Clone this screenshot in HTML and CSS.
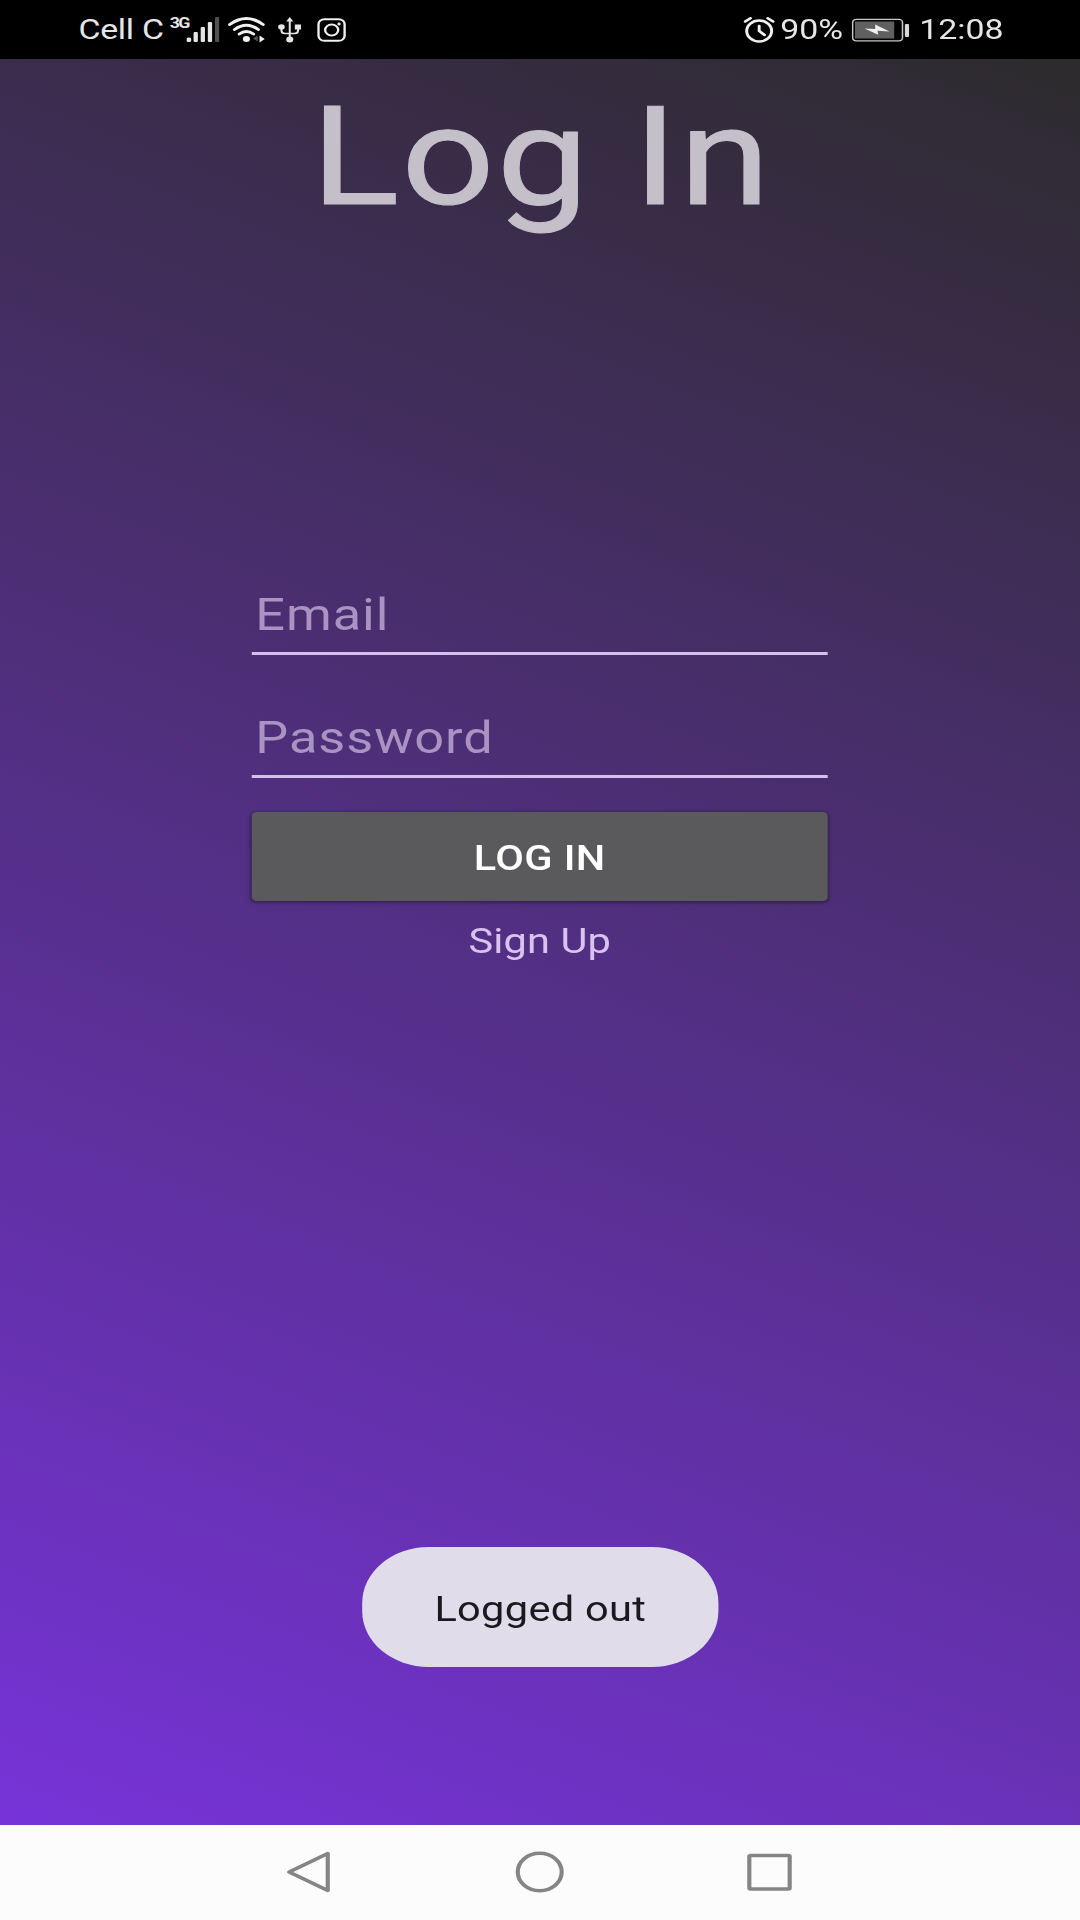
FILE: index.html
```html
<!DOCTYPE html>
<html lang="en">
<head>
    <meta charset="UTF-8">
    <meta name="viewport" content="width=device-width, initial-scale=1.0">
    <title>Log In</title>
    <link rel="stylesheet" href="styles.css">
</head>
<body>
    <div class="screen">
        <header class="status-bar">
            <div class="status-left">
                <span class="carrier">Cell C</span>
                <span class="network">3G</span>
                <svg class="signal" width="28" height="26" viewBox="0 0 28 26" fill="#e6e6e6">
                    <rect x="0" y="20.5" width="4" height="4.5" rx="1.5"/>
                    <rect x="6" y="15" width="3.6" height="10" rx="1"/>
                    <rect x="12" y="10" width="3.6" height="15" rx="1"/>
                    <rect x="18" y="5" width="3.6" height="20" rx="1"/>
                    <rect x="24" y="0" width="3.6" height="25" rx="1" fill="#505050"/>
                </svg>
                <svg class="wifi" width="32" height="26" viewBox="0 0 32 26" fill="none" stroke="#f0f0f0" stroke-width="2.8" stroke-linecap="round">
                    <path d="M1.5 7.5Q15.5-4.5 29.5 7.5"/>
                    <path d="M5.5 12.5Q15.5 4 25.5 12.5"/>
                    <path d="M9.5 17Q15.5 12 21.5 17"/>
                    <circle cx="15.5" cy="22" r="3" fill="#f0f0f0" stroke="none"/>
                    <path d="M25 18.5v6l-4-3z" fill="#555" stroke="none"/>
                    <path d="M26.5 18.5l4.5 3.5-4.5 3.5z" fill="#f0f0f0" stroke="none"/>
                </svg>
                <svg class="usb" width="20" height="26" viewBox="0 0 20 26" fill="#e6e6e6">
                    <path d="M10 3v18M3 9v4.5q0 3 3 3h8q3 0 3-3V9" fill="none" stroke="#e6e6e6" stroke-width="1.7"/>
                    <path d="M10 0l3 4.5H7z"/>
                    <circle cx="3" cy="10" r="2.8"/>
                    <rect x="14.3" y="7.5" width="5.2" height="5"/>
                    <circle cx="10" cy="22.5" r="3"/>
                </svg>
                <svg class="instagram" width="25" height="24" viewBox="0 0 25 24" fill="none" stroke="#f0f0f0" stroke-width="2">
                    <rect x="1.2" y="1.2" width="22" height="21.6" rx="5"/>
                    <circle cx="12.3" cy="12" r="5.5"/>
                    <circle cx="18.5" cy="6" r="1.4" fill="#f0f0f0" stroke="none"/>
                </svg>
            </div>
            <div class="status-right">
                <svg class="alarm" width="27" height="26" viewBox="0 0 27 26" fill="none" stroke="#f0f0f0" stroke-width="2.5" stroke-linecap="round">
                    <circle cx="13.3" cy="14" r="10.5"/>
                    <path d="M1.5 4.5L6 1.3M25 4.5l-4.5-3.2M13.3 9v5l4.5 4"/>
                </svg>
                <span class="percent">90%</span>
                <svg class="battery" width="49" height="24" viewBox="0 0 49 24">
                    <rect x="1" y="1.3" width="42" height="21.5" rx="3" fill="none" stroke="#c8c8c8" stroke-width="1.3"/>
                    <rect x="3" y="3.5" width="33" height="17" fill="#606060"/>
                    <path d="M11 10.500l9 .5V6.500l12 7-10-.8.5 4z" fill="#f0f0f0"/>
                    <rect x="45" y="6" width="3.5" height="13" rx="1" fill="#d8d8d8"/>
                </svg>
                <span class="time">12:08</span>
            </div>
        </header>

        <main class="content">
            <h1>Log In</h1>
            <form id="loginForm">
                <input type="email" id="email" name="email" placeholder="Email" aria-label="Email">
                <input type="password" id="password" name="password" placeholder="Password" aria-label="Password">
                <button type="submit">LOG IN</button>
                <a class="signup">Sign Up</a>
            </form>
            <div class="toast">Logged out</div>
        </main>

        <nav class="nav-bar">
            <svg width="38" height="42" viewBox="0 0 38 42">
                <path d="M34 2.5v37L1.500 21z"/>
            </svg>
            <svg width="38" height="42" viewBox="0 0 38 42">
                <ellipse cx="18.5" cy="21" rx="18.500" ry="18.700"/>
            </svg>
            <svg width="38" height="42" viewBox="0 0 38 42">
                <rect x="2" y="4.500" width="34" height="33.500" rx="1"/>
            </svg>
        </nav>
    </div>
</body>
</html>
```

FILE: styles.css
```css
body {
    margin: 0;
    padding: 0;
    overflow: hidden;
    font-family: Roboto, Arial, sans-serif;
}

/* Tall phone layout widened to fill the window */
.screen {
    display: flex;
    flex-direction: column;
    width: 910px;
    height: 1920px;
    transform: scaleX(1.1875);
    transform-origin: 0 0;
}

.status-bar {
    display: flex;
    justify-content: space-between;
    box-sizing: border-box;
    height: 59px;
    padding: 0 65px 0 66px;
    background-color: #000;
    color: #e6e6e6;
    font-size: 28.5px;
    line-height: 62px;
}

.status-left, .status-right {
    display: flex;
    align-items: center;
}

.carrier {
    letter-spacing: -0.2px;
}

.network {
    align-self: flex-start;
    width: 14px;
    margin: 15px 0 0 5px;
    font-size: 15px;
    font-weight: bold;
    line-height: 16px;
    letter-spacing: -1.5px;
}

.wifi {
    margin-left: 7px;
}

.usb {
    margin-left: 10px;
}

.instagram {
    margin-left: 13px;
}

.percent {
    margin-left: 4px;
}

.battery {
    margin: 0 8px 0 7px;
}

.content {
    display: flex;
    flex-direction: column;
    align-items: center;
    height: 1766px;
    background: linear-gradient(24.5deg, #7733d8, #2d2b2d);
}

h1 {
    margin: 17px 0 0;
    color: #c5bfca;
    font-size: 138px;
    font-weight: normal;
    line-height: 163px;
    letter-spacing: 1.6px;
    text-indent: 2px;
    -webkit-text-stroke: 1px #c5bfca;
}

#loginForm {
    display: flex;
    flex-direction: column;
    width: 485px;
    margin: 331px 1px 0 0;
}

input {
    box-sizing: border-box;
    height: 85px;
    margin-bottom: 38px;
    padding: 8px 3px 0;
    border: none;
    border-bottom: 3px solid #d5bfec;
    border-radius: 0;
    outline: none;
    background: none;
    color: #fff;
    font-family: inherit;
    font-size: 44px;
    letter-spacing: 0.8px;
}

input::placeholder {
    color: #a993c3;
    opacity: 1;
}

button {
    height: 89px;
    margin-top: -4px;
    padding: 3px 0 0;
    border: none;
    border-radius: 4px;
    background-color: #5a595b;
    box-shadow: 0 1px 4px rgba(0, 0, 0, 0.5);
    color: #fff;
    font-family: inherit;
    font-size: 35px;
    font-weight: 500;
    letter-spacing: 0.3px;
}

.signup {
    margin-top: 20px;
    color: #d8c3ef;
    font-size: 35px;
    line-height: 42px;
    text-align: center;
    letter-spacing: 0.1px;
}

.toast {
    width: 300px;
    height: 120px;
    margin-top: 584px;
    border-radius: 56px;
    background-color: #e0dce9;
    color: #1b1820;
    font-size: 35px;
    line-height: 125px;
    text-align: center;
    letter-spacing: 0.25px;
}

.nav-bar {
    display: flex;
    justify-content: space-between;
    box-sizing: border-box;
    height: 95px;
    padding: 26px 243px 0 242px;
    background-color: #fcfcfc;
}

.nav-bar svg {
    fill: none;
    stroke: #858585;
    stroke-width: 3.5;
    stroke-linejoin: round;
    overflow: visible;
}
```
